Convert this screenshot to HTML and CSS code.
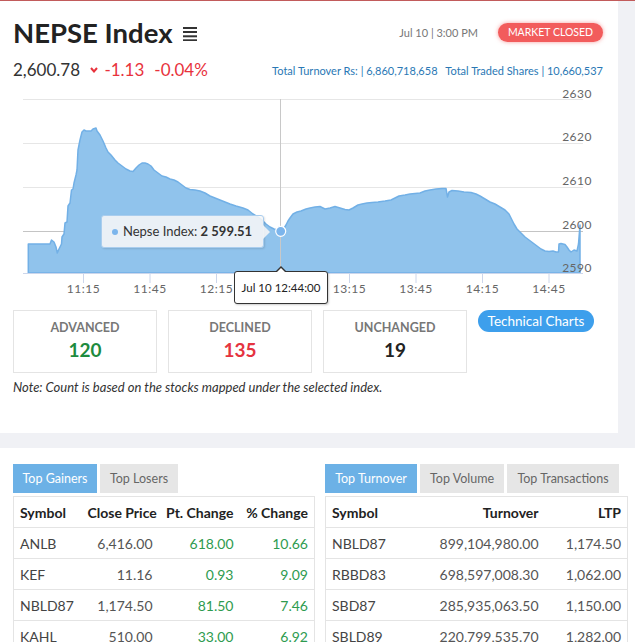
FILE: index.html
```html
<!DOCTYPE html>
<html lang="en">
<head>
    <meta charset="UTF-8">
    <title>NEPSE Index</title>
    <link rel="stylesheet" href="styles.css">
</head>
<body>
<!-- 指数面板 -->
<section class="index-panel">
    <div class="head">
        <div class="head-left">
            <h1 class="title">NEPSE Index
                <svg class="menu-icon" width="14" height="14" viewBox="0 0 14 14">
                    <rect x="0" y="0" width="14" height="2" fill="#333"/>
                    <rect x="0" y="4" width="14" height="2" fill="#333"/>
                    <rect x="0" y="8.3" width="14" height="2" fill="#333"/>
                    <rect x="0" y="12.3" width="14" height="2" fill="#333"/>
                </svg>
            </h1>
            <div class="quote">
                <span class="quote-value">2,600.78</span>
                <span class="down">
                    <svg class="chevron" width="8" height="6" viewBox="0 0 8 6"><polyline points="1,1 4,4.5 7,1" fill="none" stroke="#e8323c" stroke-width="2"/></svg>
                    -1.13
                </span>
                <span class="down">-0.04%</span>
            </div>
        </div>
        <div class="head-right">
            <div class="status">
                <span class="time">Jul 10 | 3:00 PM</span>
                <span class="badge">MARKET CLOSED</span>
            </div>
            <div class="totals">Total Turnover Rs: | 6,860,718,658 <span class="shares">Total Traded Shares | 10,660,537</span></div>
        </div>
    </div>

    <!-- 走势图 -->
    <div class="chart">
        <svg width="618" height="220" viewBox="0 86 618 220">
            <g stroke="#e6e6e6" stroke-width="1">
                <line x1="23" y1="99.5" x2="583" y2="99.5"/>
                <line x1="23" y1="143.5" x2="583" y2="143.5"/>
                <line x1="23" y1="187.5" x2="583" y2="187.5"/>
            </g>
            <line x1="23" y1="231.5" x2="583" y2="231.5" stroke="#c4c4c4"/>
            <path d="M28.3,244 L50,244 51.5,240 54,242 56,247 57.3,253 59,249 61.5,244 62,237 64,234 65,223 67,222 68,206 70,203 71.5,190 73,189 74,183 76,175 77,170 78,150 80,140 82,132 84,130 86,131 89,131 91,131 93,129 96,128 97,131 100,135 103,141 106,148 108,152 111,155 115,160 118,163 122,166 126,169 130,171 133,171.5 136,168 139,165 142,163 145,163 148,164 151,166 154,170 158,173 162,176 166,177 170,179 174,180 178,182 182,185 186,188 190,189.5 195,190 200,191 205,193 210,196 215,198 220,200 225,202 230,204 236,206 243,208 248,210 253,214 258,217 262,220 266,224 270,227 274,229 278,230 280.7,231.3 283,230 286,225 288,221 290,218 293,214 297,212 301,211 306,209 310,208 315,207 320,206.5 325,209 330,208 335,206.5 340,208 345,209.5 349,210 353,208 358,205 362,204 367,203 372,202.5 378,202 385,201 391,200 395,198 399,196 405,195 410,194 415,193.5 420,193 425,191 430,190 436,189 442,188.5 446,188.5 447.5,197 449,192 452,190.5 458,191 464,192 471,192.5 476,194 480,196 485,199 490,202 495,204 500,207 505,210 509,214 512,220 514,224 517,229 521,233 525,237 529,240 533,243 537,246 541,249 545,251 549,251.5 553,251 556,252 558.5,252 559,244 561,243.5 565,244.5 567,247 569,250 571,252 574,250 577,251 578.5,244 580,225 L580,273 28.3,273 Z" fill="#90c3ec" stroke="#72b0e6" stroke-width="1.5" stroke-linejoin="round"/>
            <line x1="23" y1="273.5" x2="583" y2="273.5" stroke="#ccd6eb"/>
            <g stroke="#ccd6eb">
                <line x1="83.5" y1="273" x2="83.5" y2="283"/>
                <line x1="150" y1="273" x2="150" y2="283"/>
                <line x1="216.5" y1="273" x2="216.5" y2="283"/>
                <line x1="283" y1="273" x2="283" y2="283"/>
                <line x1="349.5" y1="273" x2="349.5" y2="283"/>
                <line x1="416" y1="273" x2="416" y2="283"/>
                <line x1="482.5" y1="273" x2="482.5" y2="283"/>
                <line x1="549" y1="273" x2="549" y2="283"/>
            </g>
            <line x1="280.5" y1="99" x2="280.5" y2="273" stroke="#c8c8c8"/>
            <circle cx="280.7" cy="231.3" r="5" fill="#7cb5ec" stroke="#fff" stroke-width="1.2"/>
            <g class="axis-label" text-anchor="end">
                <text x="592" y="97.5">2630</text>
                <text x="592" y="141">2620</text>
                <text x="592" y="185">2610</text>
                <text x="592" y="228.5">2600</text>
                <text x="592" y="271.5">2590</text>
            </g>
            <g class="axis-label" text-anchor="middle">
                <text x="83.5" y="292.5">11:15</text>
                <text x="150" y="292.5">11:45</text>
                <text x="216.5" y="292.5">12:15</text>
                <text x="349.5" y="292.5">13:15</text>
                <text x="416" y="292.5">13:45</text>
                <text x="482.5" y="292.5">14:15</text>
                <text x="549" y="292.5">14:45</text>
            </g>
        </svg>
        <div class="tip"><span class="tip-dot"></span>Nepse Index: <b>2 599.51</b></div>
        <div class="xtip">Jul 10 12:44:00</div>
    </div>

    <!-- 涨跌统计 -->
    <div class="stats">
        <div class="stat">
            <div class="stat-label">ADVANCED</div>
            <div class="stat-num up">120</div>
        </div>
        <div class="stat">
            <div class="stat-label">DECLINED</div>
            <div class="stat-num red">135</div>
        </div>
        <div class="stat">
            <div class="stat-label">UNCHANGED</div>
            <div class="stat-num">19</div>
        </div>
        <a class="tech-btn" href="javascript:">Technical Charts</a>
    </div>
    <p class="note">Note: Count is based on the stocks mapped under the selected index.</p>
</section>

<!-- 排行榜 -->
<section class="movers">
    <div class="mover-col">
        <div class="tabs">
            <span class="tab active w84">Top Gainers</span>
            <span class="tab w78">Top Losers</span>
        </div>
        <table class="list w301">
            <colgroup><col style="width:68px"><col style="width:77px"><col style="width:81px"><col style="width:75px"></colgroup>
            <tr><th class="left">Symbol</th><th>Close Price</th><th>Pt. Change</th><th>% Change</th></tr>
            <tr><td class="left">ANLB</td><td>6,416.00</td><td class="green">618.00</td><td class="green">10.66</td></tr>
            <tr><td class="left">KEF</td><td>11.16</td><td class="green">0.93</td><td class="green">9.09</td></tr>
            <tr><td class="left">NBLD87</td><td>1,174.50</td><td class="green">81.50</td><td class="green">7.46</td></tr>
            <tr><td class="left">KAHL</td><td>510.00</td><td class="green">33.00</td><td class="green">6.92</td></tr>
        </table>
    </div>
    <div class="mover-col">
        <div class="tabs">
            <span class="tab active w92">Top Turnover</span>
            <span class="tab w84">Top Volume</span>
            <span class="tab w112">Top Transactions</span>
        </div>
        <table class="list w302">
            <colgroup><col style="width:95px"><col style="width:124px"><col style="width:83px"></colgroup>
            <tr><th class="left">Symbol</th><th>Turnover</th><th>LTP</th></tr>
            <tr><td class="left">NBLD87</td><td>899,104,980.00</td><td>1,174.50</td></tr>
            <tr><td class="left">RBBD83</td><td>698,597,008.30</td><td>1,062.00</td></tr>
            <tr><td class="left">SBD87</td><td>285,935,063.50</td><td>1,150.00</td></tr>
            <tr><td class="left">SBLD89</td><td>220,799,535.70</td><td>1,282.00</td></tr>
        </table>
    </div>
</section>
</body>
</html>
```

FILE: styles.css
```css
* {
    margin: 0;
    padding: 0;
    box-sizing: border-box;
}

body {
    background-color: #f0f1f5;
    font-family: Lato, "Open Sans", sans-serif;
    color: #333;
    /*顶部红线*/
    border-top: 1px solid #c25b5b;
}

/*指数面板*/
.index-panel {
    width: 618px;
    height: 432px;
    background-color: #fff;
    padding: 17px 15px 0 13px;
}

.head {
    display: flex;
    justify-content: space-between;
}

.title {
    font-size: 27.5px;
    line-height: 30px;
    font-weight: 700;
    color: #222;
    display: flex;
    align-items: center;
}

.menu-icon {
    margin-left: 10px;
    margin-top: 2px;
}

.quote {
    margin-top: 12px;
    line-height: 20px;
    font-size: 17px;
    display: flex;
    align-items: center;
}

.quote-value {
    color: #333;
    margin-right: 10px;
}

.down {
    color: #e8323c;
    margin-right: 10px;
}

.chevron {
    margin-right: 2px;
    vertical-align: 3px;
}

.head-right {
    display: flex;
    flex-direction: column;
    align-items: flex-end;
}

.status {
    margin-top: 5px;
    display: flex;
    align-items: center;
}

.time {
    font-size: 11px;
    color: #777;
    margin-right: 20px;
}

.badge {
    width: 105px;
    height: 19px;
    line-height: 19px;
    text-align: center;
    border-radius: 10px;
    background-color: #f25c5c;
    color: #fff;
    font-size: 10.5px;
    box-shadow: 0 0 4px rgba(242, 92, 92, 0.6);
}

.totals {
    margin-top: 21px;
    font-size: 11px;
    line-height: 16px;
    color: #2a78b5;
}

.shares {
    margin-left: 5px;
}

/*走势图*/
.chart {
    position: relative;
    height: 220px;
    margin: 6px -15px 0 -13px;
}

.chart svg {
    display: block;
}

.axis-label {
    font-size: 12px;
    fill: #666;
    letter-spacing: 0.5px;
}

.tip {
    position: absolute;
    left: 101px;
    top: 129px;
    width: 163px;
    height: 33px;
    line-height: 31px;
    padding-left: 10px;
    font-size: 13px;
    color: #333;
    background-color: rgba(247, 247, 247, 0.87);
    border: 1px solid #a9cdee;
    border-radius: 3px;
    box-shadow: 1px 1px 2px rgba(0, 0, 0, 0.12);
}

/*提示框右侧小箭头*/
.tip::after {
    content: "";
    position: absolute;
    right: -7px;
    top: 9px;
    border-top: 7px solid transparent;
    border-bottom: 7px solid transparent;
    border-left: 7px solid rgba(247, 247, 247, 0.87);
}

.tip-dot {
    display: inline-block;
    width: 6px;
    height: 6px;
    border-radius: 50%;
    background-color: #7cb5ec;
    margin-right: 5px;
    vertical-align: 1px;
}

.tip b {
    font-weight: 700;
}

.xtip {
    position: absolute;
    left: 234px;
    top: 185px;
    width: 94px;
    height: 33px;
    line-height: 31px;
    text-align: center;
    font-size: 11.5px;
    color: #222;
    background-color: #fff;
    border: 1px solid #333;
    border-radius: 3px;
    box-shadow: 1px 1px 2px rgba(0, 0, 0, 0.2);
}

.xtip::before {
    content: "";
    position: absolute;
    left: 40px;
    top: -6px;
    border-left: 6px solid transparent;
    border-right: 6px solid transparent;
    border-bottom: 6px solid #333;
}

.xtip::after {
    content: "";
    position: absolute;
    left: 41px;
    top: -4px;
    border-left: 5px solid transparent;
    border-right: 5px solid transparent;
    border-bottom: 5px solid #fff;
}

/*涨跌统计*/
.stats {
    margin-top: 4px;
    display: flex;
    gap: 11px;
    align-items: flex-start;
}

.stat {
    width: 144px;
    height: 63px;
    flex-shrink: 0;
    border: 1px solid #e4e4e4;
    text-align: center;
    padding-top: 9px;
}

.stat-label {
    font-size: 12.5px;
    line-height: 16px;
    font-weight: 700;
    color: #777;
}

.stat-num {
    margin-top: 2px;
    font-size: 19px;
    line-height: 24px;
    font-weight: 700;
    color: #222;
}

.up {
    color: #1e8b3e;
}

.red {
    color: #e53340;
}

.tech-btn {
    flex-shrink: 0;
    width: 116px;
    height: 22px;
    line-height: 22px;
    text-align: center;
    white-space: nowrap;
    border-radius: 11px;
    background-color: #3d9fec;
    color: #fff;
    font-size: 13.5px;
    text-decoration: none;
}

.note {
    margin-top: 5px;
    font-size: 13px;
    line-height: 18px;
    font-style: italic;
    color: #333;
}

/*排行榜*/
.movers {
    margin-top: 15px;
    background-color: #fff;
    padding: 16px 8px 0 13px;
    height: 200px;
    display: flex;
    gap: 10px;
}

.tabs {
    display: flex;
    gap: 3px;
    margin-bottom: 3px;
}

.tab {
    height: 29px;
    line-height: 29px;
    text-align: center;
    font-size: 12.5px;
    color: #666;
    background-color: #e6e6e6;
}

.tab.active {
    background-color: #6cb1e6;
    color: #fff;
}

.w78 { width: 78px; }
.w84 { width: 84px; }
.w92 { width: 92px; }
.w112 { width: 112px; }

.list {
    border-collapse: collapse;
    table-layout: fixed;
    border: 1px solid #e4e4e4;
    font-size: 14px;
}

.w301 { width: 301px; }
.w302 { width: 302px; }

.list th,
.list td {
    height: 31px;
    padding: 0 6px;
    text-align: right;
    border-bottom: 1px solid #e4e4e4;
    white-space: nowrap;
}

.list th {
    font-weight: 700;
    color: #222;
}

.list td {
    color: #555;
}

.list .left {
    text-align: left;
}

.list td.left {
    color: #444;
}

.list .green {
    color: #2e9b4f;
}
```
